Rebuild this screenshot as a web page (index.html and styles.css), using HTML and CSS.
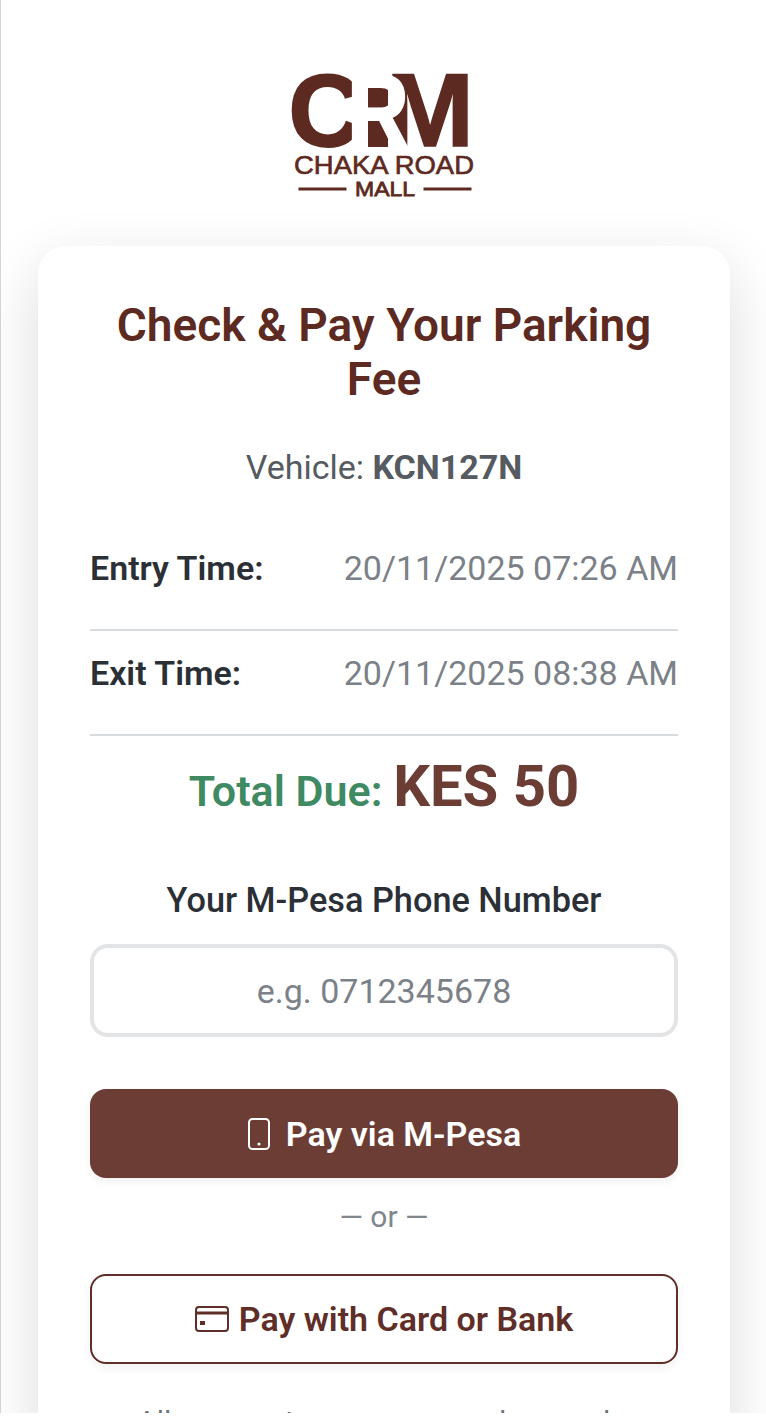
FILE: index.html
```html
<!DOCTYPE html>
<html lang="en">
<head>
    <meta charset="UTF-8">
    <meta name="viewport" content="width=device-width, initial-scale=1.0">
    <title>Check &amp; Pay Your Parking Fee - Chaka Road Mall</title>
    <link rel="stylesheet" href="styles.css">
</head>
<body>
    <main class="screen">
        <header class="brand">
            <svg class="logo" viewBox="0 0 200 140" width="200" height="140" role="img" aria-label="Chaka Road Mall">
                <text class="logo-c" x="4.5" y="84">C</text>
                <text class="logo-m" x="102" y="84" textLength="88" lengthAdjust="spacingAndGlyphs">M</text>
                <path class="logo-mark" d="M84 22h20v63H84z"/>
                <text class="logo-r" x="63" y="85" textLength="62" lengthAdjust="spacingAndGlyphs">R</text>
                <text class="logo-name" x="100" y="112" textLength="180" lengthAdjust="spacingAndGlyphs">CHAKA ROAD</text>
                <text class="logo-mall" x="101" y="134" textLength="60" lengthAdjust="spacingAndGlyphs">MALL</text>
                <path class="logo-mark" d="M14.5 125.5h48v3h-48zM139.5 125.5h48v3h-48z"/>
            </svg>
        </header>

        <section class="card">
            <h1 class="title">Check &amp; Pay Your Parking Fee</h1>
            <p class="vehicle">Vehicle: <strong>KCN127N</strong></p>

            <div class="time-row">
                <span class="time-label">Entry Time:</span>
                <span class="time-value">20/11/2025 07:26 AM</span>
            </div>
            <div class="time-row">
                <span class="time-label">Exit Time:</span>
                <span class="time-value">20/11/2025 08:38 AM</span>
            </div>

            <p class="total">Total Due: <span class="amount">KES 50</span></p>

            <form class="pay-form">
                <label class="phone-label" for="phone">Your M-Pesa Phone Number</label>
                <input class="phone-input" type="tel" id="phone" placeholder="e.g. 0712345678">

                <button class="btn btn-primary" type="button">
                    <svg class="btn-icon" viewBox="0 0 24 32" width="24" height="32" fill="none" stroke="currentColor" stroke-width="2">
                        <rect x="2" y="1" width="20" height="30" rx="3.5"/>
                        <circle cx="12" cy="26" r="1.6" fill="currentColor" stroke="none"/>
                    </svg>
                    Pay via M-Pesa
                </button>

                <p class="divider">— or —</p>

                <button class="btn btn-outline" type="button">
                    <svg class="btn-icon" viewBox="0 0 34 26" width="34" height="26" fill="none" stroke="currentColor" stroke-width="2">
                        <rect x="1" y="1" width="32" height="24" rx="3"/>
                        <path d="M1 7h32" stroke-width="3"/>
                        <rect x="5" y="15" width="5" height="4" fill="currentColor" stroke="none"/>
                    </svg>
                    Pay with Card or Bank
                </button>
            </form>

            <p class="note">All payments are processed securely.</p>
        </section>
    </main>
</body>
</html>
```

FILE: styles.css
```css
body {
    margin: 0;
    background-color: #ffffff;
    font-family: 'Roboto', 'Liberation Sans', sans-serif;
}
.screen {
    height: 1413px;
    overflow: hidden;
    padding: 62px 36px 0 37px;
    border-left: 1px solid #d4d4d4;
    box-sizing: border-box;
}
.brand {
    display: flex;
    justify-content: center;
    height: 184px;
}
.logo text {
    fill: #5d2a22;
    font-family: 'Liberation Sans', sans-serif;
    font-weight: 700;
}
.logo-mark {
    fill: #5d2a22;
}
.logo .logo-c {
    font-size: 102px;
    stroke: #5d2a22;
    stroke-width: 2px;
}
.logo .logo-m {
    font-size: 103px;
    stroke: #5d2a22;
    stroke-width: 1.5px;
}
.logo .logo-r {
    fill: #ffffff;
    stroke: #ffffff;
    stroke-width: 2px;
    font-size: 104px;
}
.logo .logo-name {
    font-size: 25px;
    font-weight: 400;
    stroke: #5d2a22;
    stroke-width: 0.6px;
    text-anchor: middle;
}
.logo .logo-mall {
    font-size: 21px;
    font-weight: 400;
    stroke: #5d2a22;
    stroke-width: 0.8px;
    text-anchor: middle;
}
.card {
    background-color: #ffffff;
    border-radius: 28px;
    padding: 52px 52px 0;
    box-shadow: 0 20px 60px rgba(0, 0, 0, 0.14);
    height: 1300px;
}
.title {
    margin: 0;
    color: #5d2a22;
    font-size: 46px;
    font-weight: 600;
    line-height: 54px;
    text-align: center;
}
.vehicle {
    margin: 39px 0 37px;
    color: #555b61;
    font-size: 34px;
    line-height: 44px;
    text-align: center;
}
.time-row {
    display: flex;
    justify-content: space-between;
    padding: 20px 0 39px;
    font-size: 34px;
    line-height: 44px;
    border-bottom: 2px solid #d9dcde;
}
.time-label {
    color: #2b3036;
    font-weight: 600;
}
.time-value {
    color: #7b8187;
}
.total {
    margin: 16px 0 0;
    color: #3f8a62;
    font-size: 43px;
    font-weight: 600;
    line-height: 68px;
    text-align: center;
}
.amount {
    color: #6b3d35;
    font-size: 58px;
    font-weight: 700;
}
.pay-form {
    display: flex;
    flex-direction: column;
    margin-top: 53px;
}
.phone-label {
    color: #2b3036;
    font-size: 34.3px;
    font-weight: 500;
    line-height: 44px;
    text-align: center;
}
.phone-input {
    height: 93px;
    margin-top: 22px;
    border: 4px solid #e2e4e5;
    border-radius: 18px;
    box-sizing: border-box;
    font-family: inherit;
    font-size: 34px;
    text-align: center;
    outline: none;
}
.phone-input::placeholder {
    color: #7b8187;
}
.btn {
    display: flex;
    align-items: center;
    justify-content: center;
    gap: 15px;
    height: 89px;
    border-radius: 16px;
    box-sizing: border-box;
    font-family: inherit;
    font-size: 34px;
    font-weight: 600;
    box-shadow: 0 4px 10px rgba(0, 0, 0, 0.06);
}
.btn-primary {
    margin-top: 52px;
    background-color: #6b3d35;
    color: #ffffff;
    border: none;
}
.btn-outline {
    height: 90px;
    background-color: #ffffff;
    color: #5f2e28;
    border: 2px solid #5f2e28;
    gap: 10px;
}
.divider {
    margin: 0;
    padding: 18px 0 36px;
    color: #80868c;
    font-size: 30px;
    line-height: 42px;
    text-align: center;
}
.note {
    margin: 38px 0 0;
    color: #6c7277;
    font-size: 30px;
    line-height: 40px;
    text-align: center;
}
```
